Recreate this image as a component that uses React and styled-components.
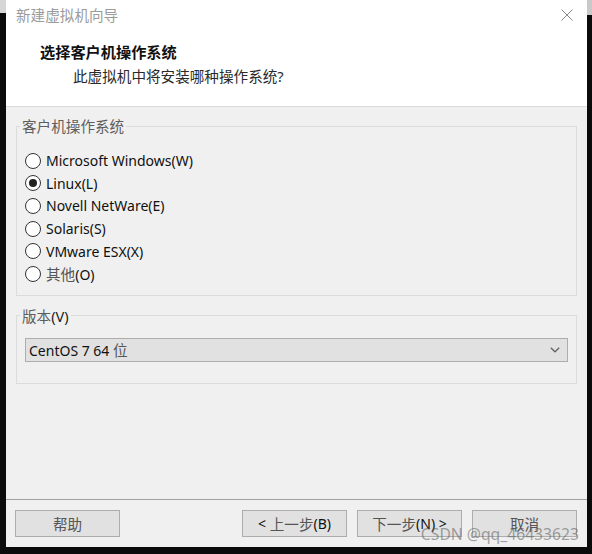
import React from "react";
import styled, { createGlobalStyle } from "styled-components";

const GlobalStyle = createGlobalStyle`
  html, body { margin: 0; padding: 0; background: #0b0b0b; }
  * { box-sizing: border-box; }
`;

const FONT = `"Segoe UI", "Noto Sans", "Noto Sans CJK SC", sans-serif`;

const Frame = styled.div`
  display: flex;
  align-items: flex-start;
  width: 592px;
  height: 554px;
  background: #0b0b0b;
  font-family: ${FONT};
  overflow: hidden;
`;

const Strip = styled.div`
  width: ${(p) => p.$w}px;
  flex: none;
  display: flex;
  flex-direction: column;
`;

const StripCap = styled.div`
  height: ${(p) => p.$h}px;
  background: ${(p) => p.$c};
`;

const Window = styled.div`
  position: relative;
  width: 581px;
  height: 547px;
  flex: none;
  background: #f0f0f0;
  display: flex;
  flex-direction: column;
`;

const Header = styled.div`
  height: 107px;
  flex: none;
  background: #fff;
  border-bottom: 1px solid #dadada;
  display: flex;
  flex-direction: column;
`;

const TitleBar = styled.div`
  height: 30px;
  display: flex;
  align-items: center;
  justify-content: space-between;
  padding: 0 14px 0 10px;
`;

const TitleText = styled.div`
  font-size: 14.6px;
  color: #9b9b9b;
  line-height: 20px;
`;

const CloseIcon = () => (
  <svg width="12" height="12" viewBox="0 0 12 12">
    <path d="M0.5 0.5 L11.5 11.5 M11.5 0.5 L0.5 11.5" stroke="#8a8a8a" strokeWidth="1" fill="none" />
  </svg>
);

const Heading = styled.div`
  padding-left: 34px;
  margin-top: 12px;
  display: flex;
  flex-direction: column;
  gap: 4px;
`;

const HeadTitle = styled.div`
  font-size: 15.2px;
  font-weight: 700;
  line-height: 20px;
  color: #111;
`;

const HeadSub = styled.div`
  font-size: 14.6px;
  line-height: 20px;
  color: #2a2a2a;
  padding-left: 33px;
`;

const Body = styled.div`
  flex: 1;
  display: flex;
  flex-direction: column;
  padding: 0 10px 0 10px;
`;

const Group = styled.fieldset`
  margin: ${(p) => p.$mt}px 0 0 0;
  padding: ${(p) => p.$pt}px 8px ${(p) => p.$pb}px 8px;
  border: 1px solid #dcdcdc;
  min-width: 0;
`;

const Legend = styled.legend`
  margin-left: -5px;
  padding: 0 2px;
  font-size: 14.6px;
  line-height: 18px;
  color: #5e5e5e;
`;

const LegendKey = styled.span`
  color: #222;
`;

const RadioRow = styled.label`
  height: 22.6px;
  display: flex;
  align-items: center;
  gap: 5px;
  font-size: 14px;
  color: #111;
`;

const Radio = styled.span`
  width: 16px;
  height: 16px;
  flex: none;
  border-radius: 50%;
  border: 1px solid #333;
  background: #fff;
  display: flex;
  align-items: center;
  justify-content: center;
  &::after {
    content: "";
    width: 8px;
    height: 8px;
    border-radius: 50%;
    background: #222;
    display: ${(p) => (p.$checked ? "block" : "none")};
  }
`;

const Cjk = styled.span`
  color: #555;
  font-size: 14.6px;
`;

const Select = styled.div`
  height: 24px;
  background: #e1e1e1;
  border: 1px solid #adadad;
  display: flex;
  align-items: center;
  justify-content: space-between;
  padding: 0 7px 0 3px;
  font-size: 14px;
  color: #111;
`;

const Chevron = () => (
  <svg width="10" height="6" viewBox="0 0 10 6">
    <path d="M0.8 0.8 L5 4.8 L9.2 0.8" stroke="#606060" strokeWidth="1.2" fill="none" />
  </svg>
);

const Footer = styled.div`
  flex: none;
  border-top: 1px solid #a0a0a0;
  padding: 10px 10px 10px 9px;
  display: flex;
  align-items: center;
  gap: 10px;
`;

const Spacer = styled.div`
  flex: 1;
`;

const Button = styled.div`
  width: 105px;
  height: 27px;
  flex: none;
  background: #e1e1e1;
  border: 1px solid #adadad;
  display: flex;
  align-items: center;
  justify-content: center;
  font-size: 14px;
  color: #111;
`;

const Watermark = styled.div`
  position: absolute;
  right: 8px;
  bottom: 3px;
  font-family: "Noto Sans", sans-serif;
  font-size: 15.7px;
  line-height: 20px;
  color: rgba(90, 90, 90, 0.55);
  pointer-events: none;
  white-space: nowrap;
`;

const options = [
  { label: "Microsoft Windows(W)" },
  { label: "Linux(L)", checked: true },
  { label: "Novell NetWare(E)" },
  { label: "Solaris(S)" },
  { label: "VMware ESX(X)" },
  { label: "(O)", cjk: "其他" },
];

export default function App() {
  return (
    <>
      <GlobalStyle />
      <Frame>
        <Strip $w={6}>
          <StripCap $h={13} $c="#d6d6d6" />
        </Strip>
        <Window>
          <Header>
            <TitleBar>
              <TitleText>新建虚拟机向导</TitleText>
              <CloseIcon />
            </TitleBar>
            <Heading>
              <HeadTitle>选择客户机操作系统</HeadTitle>
              <HeadSub>此虚拟机中将安装哪种操作系统?</HeadSub>
            </Heading>
          </Header>
          <Body>
            <Group $mt={10} $pt={14.5} $pb={10}>
              <Legend>客户机操作系统</Legend>
              {options.map((o) => (
                <RadioRow key={o.label}>
                  <Radio $checked={o.checked} />
                  <span>
                    {o.cjk && <Cjk>{o.cjk}</Cjk>}
                    {o.label}
                  </span>
                </RadioRow>
              ))}
            </Group>
            <Group $mt={10.5} $pt={13} $pb={21}>
              <Legend>
                <span>版本</span>
                <LegendKey>(V)</LegendKey>
              </Legend>
              <Select>
                <span>CentOS 7 64 <Cjk>位</Cjk></span>
                <Chevron />
              </Select>
            </Group>
            <Spacer />
          </Body>
          <Footer>
            <Button>
              <Cjk>帮助</Cjk>
            </Button>
            <Spacer />
            <Button>
              &lt; <Cjk>&nbsp;上一步</Cjk>(B)
            </Button>
            <Button>
              <Cjk>下一步</Cjk>(N) &gt;
            </Button>
            <Button>
              <Cjk>取消</Cjk>
            </Button>
          </Footer>
          <Watermark>CSDN @qq_46433623</Watermark>
        </Window>
        <Strip $w={5}>
          <StripCap $h={15} $c="#c9c9c9" />
        </Strip>
      </Frame>
    </>
  );
}
